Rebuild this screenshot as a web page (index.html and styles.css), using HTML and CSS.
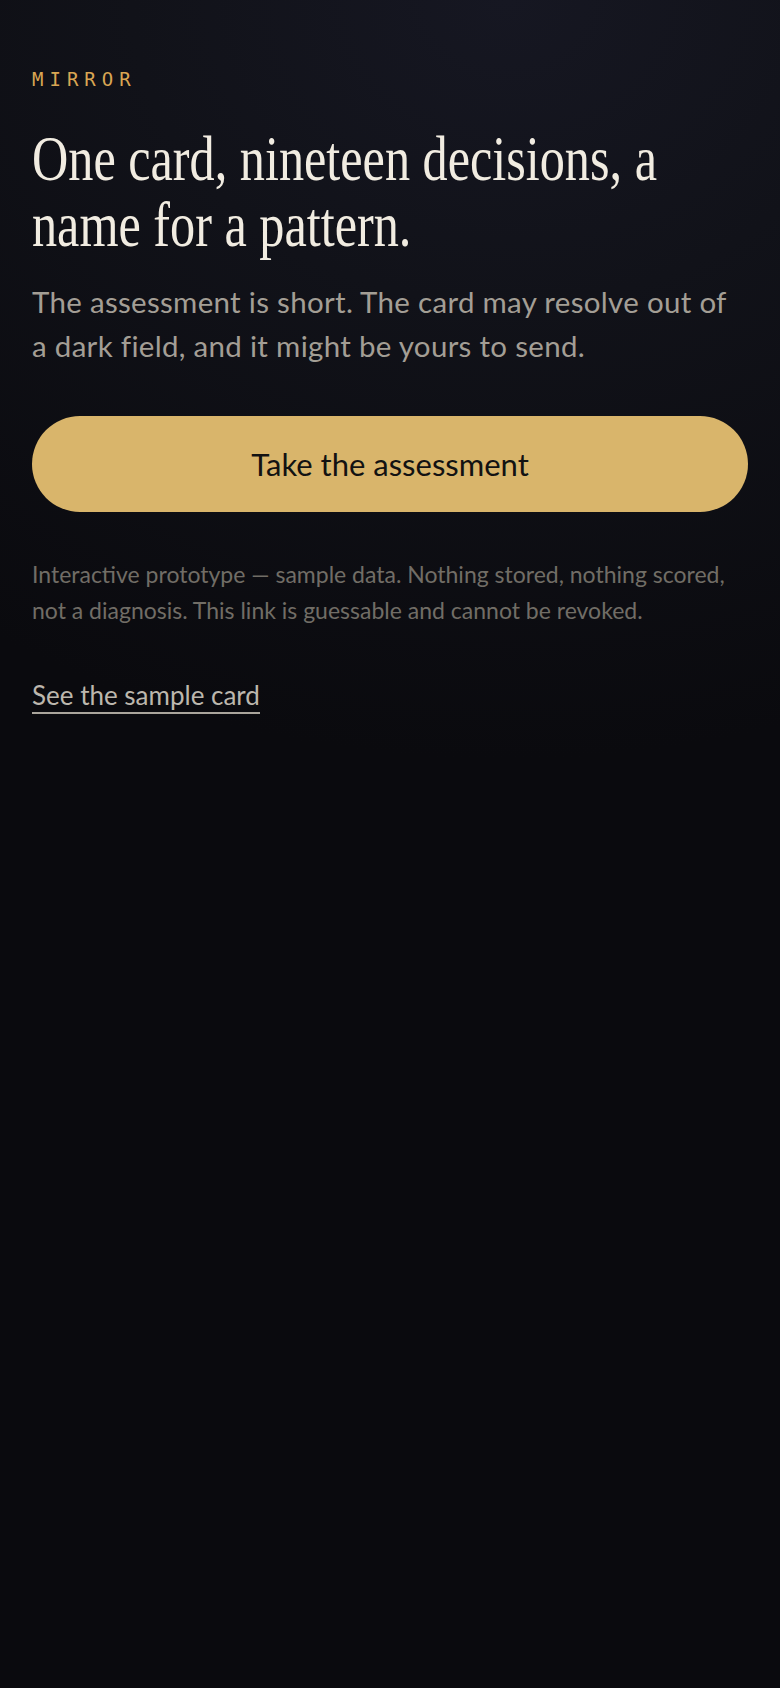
FILE: index.html
```html
<!DOCTYPE html>
<html lang="en">
<head>
<meta charset="utf-8">
<meta name="viewport" content="width=device-width, initial-scale=1">
<title>Mirror</title>
<link rel="stylesheet" href="styles.css">
</head>
<body>
<main class="intro">
  <div class="eyebrow">MIRROR</div>
  <h1 class="headline">One card, nineteen decisions, a name for a pattern.</h1>
  <p class="lede">The assessment is short. The card may resolve out of a dark field, and it might be yours to send.</p>
  <a class="cta" href="#">Take the assessment</a>
  <p class="note">Interactive prototype — sample data. Nothing stored, nothing scored, not a diagnosis. This link is guessable and cannot be revoked.</p>
  <a class="sample-link" href="#">See the sample card</a>
</main>
</body>
</html>
```
FILE: styles.css
```css
html, body {
  margin: 0;
  padding: 0;
}

body {
  min-height: 1688px;
  background-color: #0a0a0e;
  background-image: radial-gradient(ellipse 120% 45% at 65% 0%, #161722 0%, #111219 40%, #0a0a0e 100%);
  background-repeat: no-repeat;
  font-family: "Lato", "Liberation Sans", sans-serif;
  overflow-x: hidden;
}

.intro {
  display: flex;
  flex-direction: column;
  align-items: flex-start;
  padding: 67px 32px 64px;
}

.eyebrow {
  font-family: "DejaVu Sans Mono", "Liberation Mono", monospace;
  font-size: 19px;
  line-height: 24px;
  letter-spacing: 6px;
  color: #d9a653;
}

.headline {
  margin: 35px 0 0;
  width: calc((100vw - 64px) / 0.785);
  transform: scaleX(0.785);
  transform-origin: left top;
  font-family: "Liberation Serif", serif;
  font-weight: 400;
  font-size: 64px;
  line-height: 66px;
  color: #f1ece1;
}

.lede {
  margin: 22px 0 0;
  max-width: 712px;
  font-size: 29.5px;
  line-height: 44px;
  letter-spacing: 0.3px;
  color: #a39e95;
}

.cta {
  align-self: stretch;
  margin-top: 48px;
  height: 96px;
  display: flex;
  align-items: center;
  justify-content: center;
  border-radius: 48px;
  background: #d9b56b;
  color: #121212;
  font-size: 31px;
  text-decoration: none;
}

.note {
  margin: 44px 0 0;
  font-size: 23px;
  line-height: 36px;
  color: #716d66;
}

.sample-link {
  display: inline-block;
  margin-top: 52px;
  font-size: 26px;
  line-height: 30px;
  padding-bottom: 2px;
  border-bottom: 2px solid #aaa59c;
  color: #bcb7ad;
  text-decoration: none;
}
```
